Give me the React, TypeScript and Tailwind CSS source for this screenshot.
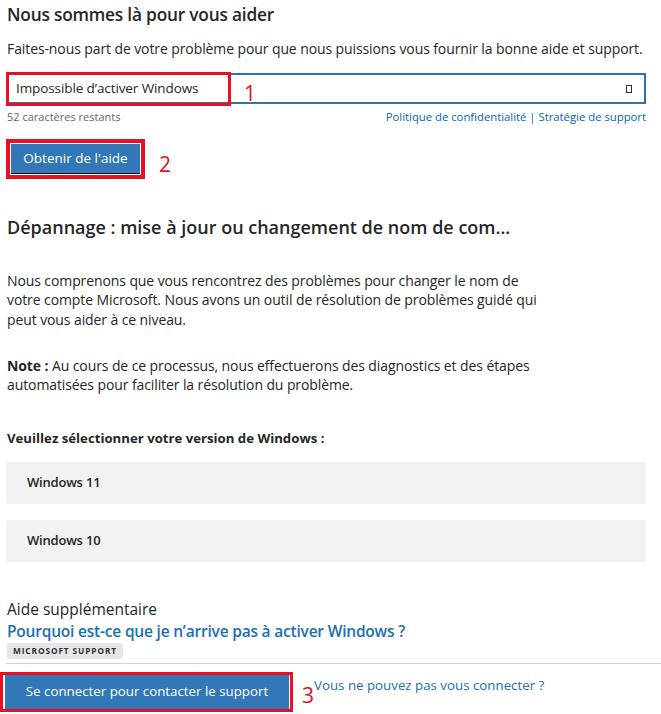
import React from 'react';

const versions = ['Windows 11', 'Windows 10'];

const App: React.FC = () => {
  return (
    <div className="w-[661px] h-[714px] bg-white text-[#262626] overflow-hidden font-['Open_Sans',sans-serif]">
      <div className="pl-[7px] pr-[15px]">
        <h1 className="pt-[3px] text-[17.3px] leading-[24px] font-semibold tracking-[-0.2px]">Nous sommes là pour vous aider</h1>
        <p className="mt-[12px] text-[14px] leading-[20px] tracking-[-0.1px] whitespace-nowrap">
          Faites-nous part de votre problème pour que nous puissions vous fournir la bonne aide et support.
        </p>

        {/* champ de saisie */}
        <div className="relative mt-[14px] -ml-[1px] h-[31px] border-2 border-[#3071b0] flex items-center">
          <div className="absolute -left-[2px] -top-[3px] w-[225px] h-[34px] border-[3px] border-[#e81123]" />
          <span className="pl-[8px] text-[13.5px] tracking-[-0.1px]">Impossible d’activer Windows</span>
          <span className="absolute left-[236px] top-[6px] text-[21px] leading-[24px] text-[#e81123]">1</span>
          <span className="ml-auto mr-[12px] w-[6px] h-[8px] border border-[#333]" />
        </div>

        <div className="mt-[5px] flex justify-between text-[11px] leading-[16px]">
          <span className="text-[#666]">52 caractères restants</span>
          <span className="text-[11.3px] text-[#0067b8]">Politique de confidentialité | Stratégie de support</span>
        </div>

        {/* bouton aide */}
        <div className="mt-[12px] flex items-center">
          <div className="-ml-[1px] border-[4px] border-[#e81123] p-[1px]">
            <button className="h-[30px] w-[129px] bg-[#3277b7] text-white text-[13.5px] border-b border-[#111]">Obtenir de l'aide</button>
          </div>
          <span className="ml-[14px] mt-[12px] text-[21px] text-[#e81123]">2</span>
        </div>

        <h2 className="mt-[34px] text-[18px] leading-[24px] font-semibold whitespace-nowrap">
          Dépannage : mise à jour ou changement de nom de com...
        </h2>

        <p className="mt-[32px] w-[540px] text-[14px] leading-[19.5px] tracking-[-0.1px]">
          Nous comprenons que vous rencontrez des problèmes pour changer le nom de votre compte Microsoft. Nous avons un outil de résolution de problèmes guidé qui peut vous aider à ce niveau.
        </p>

        <p className="mt-[26.5px] w-[540px] text-[14px] leading-[19.5px] tracking-[-0.1px]">
          <b className="font-bold">Note :</b> Au cours de ce processus, nous effectuerons des diagnostics et des étapes automatisées pour faciliter la résolution du problème.
        </p>

        <p className="mt-[33px] text-[13.2px] leading-[20px] font-bold">Veuillez sélectionner votre version de Windows :</p>

        <div className="mt-[14px] flex flex-col gap-[16px] -ml-[1px]">
          {versions.map(v => (
            <div key={v} className="h-[42px] rounded-[2px] bg-[#f2f2f2] flex items-center pl-[21px] text-[13px] font-semibold tracking-[-0.2px]">
              {v}
            </div>
          ))}
        </div>

        <div className="mt-[36px] text-[15.5px] leading-[22px] font-medium">Aide supplémentaire</div>
        <a className="block text-[15.5px] leading-[22px] font-semibold text-[#1a6fb3] tracking-[-0.2px]">Pourquoi est-ce que je n’arrive pas à activer Windows ?</a>
        <div className="mt-[1px] w-fit px-[6px] h-[16px] leading-[16px] rounded-[3px] bg-[#e6e6e6] text-[8.3px] font-bold tracking-[0.9px] text-[#333]">MICROSOFT SUPPORT</div>
      </div>

      <div className="mt-[4px] ml-[6px] border-t border-[#d2d2d2]" />

      <div className="mt-[8px] flex items-start">
        <div className="border-[3px] border-[#e81123] pr-[1px]">
          <button className="h-[34px] w-[286px] bg-[#3277b7] text-white text-[13.3px] border-l-2 border-white">Se connecter pour contacter le support</button>
        </div>
        <span className="ml-[9px] mt-[8px] text-[21px] leading-[30px] text-[#e81123]">3</span>
        <a className="mt-[4px] text-[13.3px] text-[#1a6fb3]">Vous ne pouvez pas vous connecter ?</a>
      </div>
    </div>
  );
};

export default App;
